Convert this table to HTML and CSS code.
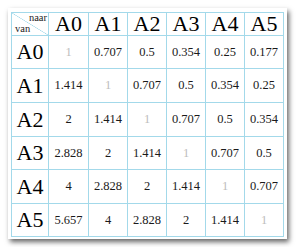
FILE: index.html
```html
<!DOCTYPE html>
<html>
<head>
<meta charset="utf-8">
<link rel="stylesheet" href="styles.css">
</head>
<body>
<div class="card">
  <div class="grid">
    <div class="cell corner"><span class="to">naar</span><span class="from">van</span></div>
    <div class="cell head">A0</div>
    <div class="cell head">A1</div>
    <div class="cell head">A2</div>
    <div class="cell head">A3</div>
    <div class="cell head">A4</div>
    <div class="cell head">A5</div>

    <div class="cell head">A0</div>
    <div class="cell diag">1</div><div class="cell">0.707</div><div class="cell">0.5</div><div class="cell">0.354</div><div class="cell">0.25</div><div class="cell">0.177</div>

    <div class="cell head">A1</div>
    <div class="cell">1.414</div><div class="cell diag">1</div><div class="cell">0.707</div><div class="cell">0.5</div><div class="cell">0.354</div><div class="cell">0.25</div>

    <div class="cell head">A2</div>
    <div class="cell">2</div><div class="cell">1.414</div><div class="cell diag">1</div><div class="cell">0.707</div><div class="cell">0.5</div><div class="cell">0.354</div>

    <div class="cell head">A3</div>
    <div class="cell">2.828</div><div class="cell">2</div><div class="cell">1.414</div><div class="cell diag">1</div><div class="cell">0.707</div><div class="cell">0.5</div>

    <div class="cell head">A4</div>
    <div class="cell">4</div><div class="cell">2.828</div><div class="cell">2</div><div class="cell">1.414</div><div class="cell diag">1</div><div class="cell">0.707</div>

    <div class="cell head">A5</div>
    <div class="cell">5.657</div><div class="cell">4</div><div class="cell">2.828</div><div class="cell">2</div><div class="cell">1.414</div><div class="cell diag">1</div>
  </div>
</div>
</body>
</html>
```
FILE: styles.css
```css
html, body {
  margin: 0;
  padding: 0;
  background: #ffffff;
}
body {
  padding: 8px;
  font-family: "Liberation Serif", "Times New Roman", serif;
  color: #1a1a1a;
}
.card {
  width: 279px;
  height: 231px;
  box-sizing: border-box;
  background: #ffffff;
  padding: 4px 3px 2px 3px;
  box-shadow: 2px 3px 5px rgba(0, 0, 0, 0.6);
}
.grid {
  display: grid;
  grid-template-columns: 36px 39px 38px 38px 38px 38px 38px;
  grid-template-rows: 22px 32px 33px 33px 32px 33px 32px;
  gap: 1px;
  padding: 1px;
  background: #a3d9ea;
  width: max-content;
}
.cell {
  background: #ffffff;
  display: flex;
  align-items: center;
  justify-content: center;
  font-size: 12.5px;
  line-height: 1;
}
.head {
  font-size: 22px;
  color: #000000;
}
.diag {
  color: #bdbdbd;
}
.corner {
  position: relative;
  display: block;
  font-size: 10.5px;
  background: #ffffff linear-gradient(to top right, transparent calc(50% - 0.6px), #a3d9ea 50%, transparent calc(50% + 0.6px));
}
.to {
  position: absolute;
  right: 1px;
  top: 0px;
}
.from {
  position: absolute;
  left: 3px;
  bottom: 1px;
}
```
